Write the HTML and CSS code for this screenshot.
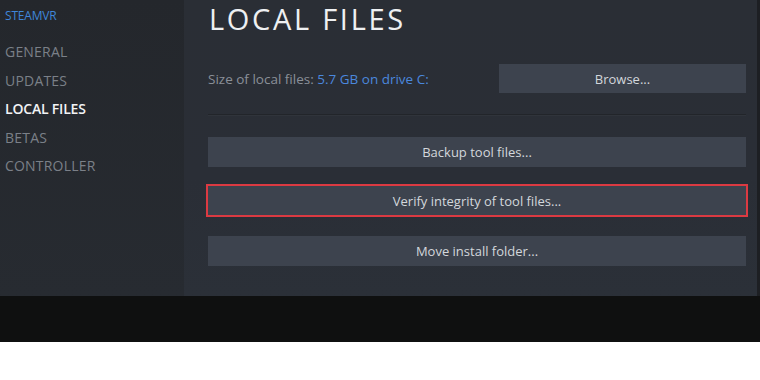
FILE: index.html
```html
<!DOCTYPE html>
<html>
<head>
<meta charset="utf-8">
<link rel="stylesheet" href="styles.css">
</head>
<body>
<div class="window">
  <nav class="sidebar">
    <div class="game">STEAMVR</div>
    <ul class="menu">
      <li>GENERAL</li>
      <li>UPDATES</li>
      <li class="active">LOCAL FILES</li>
      <li>BETAS</li>
      <li>CONTROLLER</li>
    </ul>
  </nav>
  <main class="main">
    <h1 class="title">LOCAL FILES</h1>
    <div class="size-row">
      <span class="size-label">Size of local files: <span class="size-value">5.7 GB on drive C:</span></span>
      <button class="btn browse">Browse...</button>
    </div>
    <div class="sep"></div>
    <button class="btn wide backup">Backup tool files...</button>
    <button class="btn wide verify">Verify integrity of tool files...</button>
    <button class="btn wide move">Move install folder...</button>
  </main>
</div>
<div class="footer-strip"></div>
</body>
</html>
```
FILE: styles.css
```css
html, body {
  margin: 0;
  padding: 0;
  background: #ffffff;
  font-family: "Open Sans", "Noto Sans", "Liberation Sans", sans-serif;
}
.window {
  display: flex;
  height: 296px;
  width: 760px;
  background: #1d1f23;
}
.sidebar {
  width: 184px;
  flex: none;
  background: linear-gradient(180deg, #24272c 0%, #272b31 100%);
  padding-left: 5px;
  box-sizing: border-box;
}
.game {
  color: #3f86d8;
  font-size: 12px;
  line-height: 12px;
  margin-top: 10px;
  letter-spacing: -0.2px;
}
.menu {
  list-style: none;
  margin: 0;
  padding: 0;
  margin-top: 16px;
}
.menu li {
  color: #7b8088;
  font-size: 14px;
  line-height: 28.5px;
  letter-spacing: 0.2px;
}
.menu li.active {
  color: #f2f3f5;
  font-weight: 600;
  letter-spacing: -0.2px;
}
.main {
  width: 573px;
  flex: none;
  box-sizing: border-box;
  padding: 0 11px 0 24px;
  background: linear-gradient(180deg, #2a2e35 0%, #2a2e36 60%, #2b3038 100%);
  display: flex;
  flex-direction: column;
}
.title {
  margin: 0;
  margin-top: 2px;
  margin-left: 1px;
  font-weight: 400;
  font-size: 29px;
  line-height: 34px;
  letter-spacing: 2.7px;
  color: #eef0f2;
}
.size-row {
  display: flex;
  align-items: center;
  justify-content: space-between;
  margin-top: 28px;
}
.size-label {
  color: #8a9099;
  font-size: 13.5px;
}
.size-value {
  color: #4a88de;
}
.btn {
  font-family: inherit;
  border: none;
  background: #3d434e;
  color: #d3d7dc;
  font-size: 13px;
  height: 29px;
  padding: 0;
  cursor: pointer;
}
.browse {
  width: 247px;
}
.sep {
  height: 1px;
  background: #22252a;
  margin-top: 21px;
  box-shadow: 0 1px 0 #30343b;
}
.wide {
  width: 100%;
  display: block;
  height: 30px;
}
.backup {
  margin-top: 22px;
}
.verify {
  margin-top: 19px;
  height: 29px;
  outline: 2px solid #dc3a42;
}
.move {
  margin-top: 21px;
}
.footer-strip {
  height: 46px;
  width: 760px;
  background: #0f1010;
}
```
